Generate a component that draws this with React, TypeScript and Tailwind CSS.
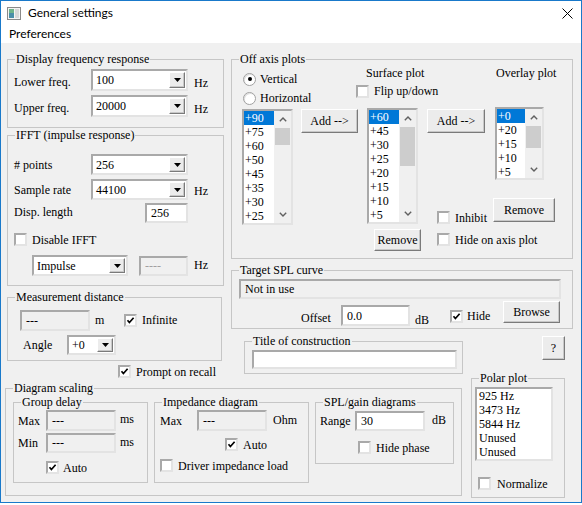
import React from "react";

// classic win32 3d edges
const sunken =
  "border-2 border-t-[#a9a9a9] border-l-[#a9a9a9] border-b-[#e3e3e3] border-r-[#e3e3e3]";
const raised =
  "border border-t-white border-l-white border-b-[#7a7a7a] border-r-[#7a7a7a] shadow-[inset_-1px_-1px_0_#c8c8c8] bg-[#ececec]";

function Group({
  title,
  className = "",
  children,
}: {
  title: string;
  className?: string;
  children?: React.ReactNode;
}) {
  return (
    <fieldset className={`border border-[#c6c6c6] shrink-0 ${className}`}>
      <legend className="ml-[7px] px-[1px] leading-[14px]">{title}</legend>
      {children}
    </fieldset>
  );
}

function Check({ checked = false }: { checked?: boolean }) {
  return (
    <div className={`w-[13px] h-[13px] shrink-0 bg-white ${sunken} flex items-center justify-center`}>
      {checked && (
        <svg width="9" height="9" viewBox="0 0 9 9">
          <polyline points="1.5,4.2 3.4,6.5 7.6,1.8" fill="none" stroke="#000" strokeWidth="1.7" />
        </svg>
      )}
    </div>
  );
}

function Radio({ checked = false }: { checked?: boolean }) {
  return (
    <div className="w-[13px] h-[13px] shrink-0 rounded-full border border-[#a0a0a0] bg-white flex items-center justify-center shadow-[inset_1px_1px_0_#e0e0e0]">
      {checked && <div className="w-[4px] h-[4px] rounded-full bg-black" />}
    </div>
  );
}

function Edit({
  value = "",
  className = "",
  disabled = false,
  gray = false,
}: {
  value?: string;
  className?: string;
  disabled?: boolean;
  gray?: boolean;
}) {
  return (
    <div
      className={`${sunken} ${disabled ? "bg-[#f0f0f0]" : "bg-white"} ${
        gray ? "text-[#a0a0a0]" : ""
      } flex items-center pl-[4px] whitespace-nowrap overflow-hidden shrink-0 ${className}`}
    >
      {value}
    </div>
  );
}

function Combo({ value, className = "" }: { value: string; className?: string }) {
  return (
    <div className={`${sunken} bg-white flex shrink-0 ${className}`}>
      <span className="flex-1 pl-[3px] self-center whitespace-nowrap">{value}</span>
      <span className={`w-[16px] my-[1px] mr-[1px] flex items-center justify-center ${raised}`}>
        <svg width="7" height="4" viewBox="0 0 7 4">
          <path d="M0 0h7L3.5 4z" fill="#000" />
        </svg>
      </span>
    </div>
  );
}

function Button({ label, className = "" }: { label: string; className?: string }) {
  return (
    <div className={`${raised} flex items-center justify-center shrink-0 whitespace-nowrap ${className}`}>
      {label}
    </div>
  );
}

function Chevron({ up }: { up?: boolean }) {
  return (
    <div className="h-[17px] flex items-center justify-center">
      <svg width="8" height="5" viewBox="0 0 8 5">
        <polyline
          points={up ? "0.8,4.3 4,1.1 7.2,4.3" : "0.8,0.7 4,3.9 7.2,0.7"}
          fill="none"
          stroke="#606060"
          strokeWidth="1.4"
        />
      </svg>
    </div>
  );
}

function ListBox({
  items,
  className,
  thumb,
}: {
  items: string[];
  className: string;
  thumb: string;
}) {
  return (
    <div className={`${sunken} bg-white flex overflow-hidden shrink-0 ${className}`}>
      <div className="flex-1 flex flex-col overflow-hidden">
        {items.map((it, i) => (
          <div
            key={it}
            className={`h-[14px] leading-[14px] pl-[1px] shrink-0 ${i === 0 ? "bg-[#0078d7] text-white" : ""}`}
          >
            {it}
          </div>
        ))}
      </div>
      <div className="w-[17px] bg-[#f0f0f0] flex flex-col">
        <Chevron up />
        <div className="flex-1">
          <div className={`bg-[#cdcdcd] mx-[1px] ${thumb}`} />
        </div>
        <Chevron />
      </div>
    </div>
  );
}

function CheckRow({
  label,
  checked,
  className = "",
  gap = "ml-[5px]",
}: {
  label: string;
  checked?: boolean;
  className?: string;
  gap?: string;
}) {
  return (
    <div className={`flex items-center whitespace-nowrap ${className}`}>
      <Check checked={checked} />
      <span className={gap}>{label}</span>
    </div>
  );
}

export default function App() {
  return (
    <div className="w-[582px] h-[505px] bg-white overflow-hidden">
      <div className="h-[503px] border border-[#1979ca] flex flex-col">
        {/* title bar */}
        <div className="h-[24px] flex items-center bg-white font-['Lato',sans-serif] text-[12px] text-black shrink-0">
          <svg width="14" height="13" viewBox="0 0 14 13" className="ml-[6px]">
            <rect x="0.5" y="0.5" width="13" height="12" fill="#f4f4f4" stroke="#8a8a8a" />
            <rect x="2" y="2" width="5" height="9" fill="#4a8fa8" />
            <rect x="2" y="2" width="5" height="4" fill="#6fb38a" />
            <rect x="8" y="2" width="4" height="9" fill="#d8d8d8" />
          </svg>
          <span className="ml-[7px]">General settings</span>
          <svg width="11" height="11" viewBox="0 0 11 11" className="ml-auto mr-[8px]">
            <path d="M0.5 0.5L10.5 10.5M10.5 0.5L0.5 10.5" stroke="#000" strokeWidth="1" />
          </svg>
        </div>

        {/* menu */}
        <div className="h-[18px] flex items-center bg-white font-['Lato',sans-serif] text-[12px] text-black pl-[8px] shrink-0">
          Preferences
        </div>

        {/* client */}
        <div className="flex-1 bg-[#f0f0f0] font-['Liberation_Serif',serif] text-[12px] leading-[14px] text-black">
          <div className="flex items-start mt-[9px]">
            {/* left column */}
            <div className="ml-[6px] w-[217px] flex flex-col shrink-0">
              <Group title="Display frequency response" className="w-[217px] h-[76px]">
                <div className="pl-[6px] pt-[3px] flex flex-col gap-[4px]">
                  <div className="flex items-start h-[22px]">
                    <span className="w-[77px] mt-[6px]">Lower freq.</span>
                    <Combo value="100" className="w-[97px] h-[22px]" />
                    <span className="ml-[6px] mt-[7px]">Hz</span>
                  </div>
                  <div className="flex items-start h-[22px]">
                    <span className="w-[77px] mt-[6px]">Upper freq.</span>
                    <Combo value="20000" className="w-[97px] h-[22px]" />
                    <span className="ml-[6px] mt-[7px]">Hz</span>
                  </div>
                </div>
              </Group>

              <Group title="IFFT (impulse response)" className="w-[217px] h-[158px]">
                <div className="pl-[6px] flex flex-col">
                  <div className="flex items-center mt-[12px] h-[21px]">
                    <span className="w-[77px]"># points</span>
                    <Combo value="256" className="w-[97px] h-[21px]" />
                  </div>
                  <div className="flex items-center mt-[4px] h-[21px]">
                    <span className="w-[77px]">Sample rate</span>
                    <Combo value="44100" className="w-[97px] h-[21px]" />
                    <span className="ml-[6px] mt-[3px]">Hz</span>
                  </div>
                  <div className="flex items-center mt-[3px] h-[20px]">
                    <span className="w-[131px] -mt-[2px]">Disp. length</span>
                    <Edit value="256" className="w-[43px] h-[20px]" />
                  </div>
                  <CheckRow label="Disable IFFT" className="mt-[10px] h-[13px]" />
                  <div className="flex items-center mt-[9px] h-[21px] ml-[18px]">
                    <Combo value="Impulse" className="w-[96px] h-[21px]" />
                    <Edit value="----" disabled gray className="ml-[11px] w-[49px] h-[20px]" />
                    <span className="ml-[6px] -mt-[2px]">Hz</span>
                  </div>
                </div>
              </Group>

              <Group title="Measurement distance" className="mt-[4px] w-[215px] h-[71px]">
                <div className="flex flex-col">
                  <div className="flex items-start mt-[6px] ml-[12px]">
                    <Edit value="---" disabled className="w-[70px] h-[21px]" />
                    <span className="ml-[5px] w-[29px] mt-[3px]">m</span>
                    <div className="mt-[4px]">
                      <Check checked />
                    </div>
                    <span className="ml-[5px] mt-[3px]">Infinite</span>
                  </div>
                  <div className="flex items-start mt-[4px] ml-[15px]">
                    <span className="w-[44px] mt-[3px]">Angle</span>
                    <Combo value="+0" className="w-[49px] h-[20px]" />
                  </div>
                </div>
              </Group>

              <CheckRow label="Prompt on recall" checked className="mt-[3px] ml-[111px] h-[15px]" />
            </div>

            {/* right column */}
            <div className="ml-[7px] w-[342px] flex flex-col shrink-0">
              <Group title="Off axis plots" className="w-[342px] h-[207px]">
                <div className="flex items-start">
                  {/* list of angles */}
                  <div className="ml-[10px] w-[51px] flex flex-col shrink-0">
                    <div className="flex items-center mt-[6px] ml-[1px] whitespace-nowrap">
                      <Radio checked />
                      <span className="ml-[4px]">Vertical</span>
                    </div>
                    <div className="flex items-center mt-[5px] ml-[1px] whitespace-nowrap">
                      <Radio />
                      <span className="ml-[4px]">Horizontal</span>
                    </div>
                    <ListBox
                      items={["+90", "+75", "+60", "+50", "+45", "+35", "+30", "+25"]}
                      className="mt-[4px] w-[51px] h-[116px]"
                      thumb="h-[17px]"
                    />
                  </div>

                  <Button label="Add -->" className="ml-[8px] mt-[43px] w-[57px] h-[24px]" />

                  {/* surface plot */}
                  <div className="-ml-[2px] w-[64px] flex flex-col shrink-0">
                    <span className="ml-[10px] whitespace-nowrap">Surface plot</span>
                    <CheckRow label="Flip up/down" className="mt-[4px]" />
                    <ListBox
                      items={["+60", "+45", "+30", "+25", "+20", "+15", "+10", "+5"]}
                      className="mt-[10px] ml-[11px] w-[51px] h-[116px]"
                      thumb="h-[39px]"
                    />
                    <Button label="Remove" className="mt-[5px] ml-[18px] w-[47px] h-[22px]" />
                  </div>

                  <div className="ml-[7px] w-[66px] flex flex-col shrink-0">
                    <Button label="Add -->" className="mt-[43px] w-[58px] h-[24px]" />
                    <CheckRow label="Inhibit" className="mt-[78px] ml-[10px] h-[13px]" />
                    <CheckRow label="Hide on axis plot" className="mt-[9px] ml-[10px] h-[13px]" />
                  </div>

                  {/* overlay plot */}
                  <div className="flex flex-col shrink-0">
                    <span className="ml-[3px] whitespace-nowrap">Overlay plot</span>
                    <ListBox
                      items={["+0", "+20", "+15", "+10", "+5"]}
                      className="mt-[27px] ml-[2px] w-[49px] h-[73px]"
                      thumb="h-[22px]"
                    />
                    <Button label="Remove" className="mt-[18px] w-[62px] h-[24px]" />
                  </div>
                </div>
              </Group>

              <Group title="Target SPL curve" className="mt-[4px] w-[342px] h-[66px]">
                <div className="flex flex-col">
                  <Edit value="Not in use" disabled className="mt-[2px] ml-[7px] w-[322px] h-[20px] pl-[3px]" />
                  <div className="flex items-start mt-[2px] ml-[69px]">
                    <span className="w-[40px] mt-[10px]">Offset</span>
                    <Edit value="0.0" className="mt-[4px] w-[69px] h-[21px]" />
                    <span className="ml-[5px] w-[35px] mt-[12px]">dB</span>
                    <div className="mt-[9px]">
                      <Check checked />
                    </div>
                    <span className="ml-[4px] w-[36px] mt-[8px]">Hide</span>
                    <Button label="Browse" className="w-[57px] h-[22px]" />
                  </div>
                </div>
              </Group>

              <div className="flex items-start mt-[5px]">
                <Group title="Title of construction" className="ml-[13px] w-[219px] h-[40px]">
                  <Edit className="mt-[2px] ml-[7px] w-[205px] h-[19px]" />
                </Group>
                <Button label="?" className="ml-[79px] mt-[2px] w-[23px] h-[24px]" />
              </div>
            </div>
          </div>

          {/* bottom row */}
          <div className="flex items-start mt-[2px]">
            <Group title="Diagram scaling" className="ml-[4px] w-[457px] h-[115px]">
              <div className="flex items-start ml-[7px]">
                <Group title="Group delay" className="w-[135px] h-[88px]">
                  <div className="flex flex-col">
                    <div className="flex items-center mt-[1px] h-[21px]">
                      <span className="ml-[4px] w-[28px]">Max</span>
                      <Edit value="---" disabled className="w-[70px] h-[21px]" />
                      <span className="ml-[4px] -mt-[3px]">ms</span>
                    </div>
                    <div className="flex items-center mt-[2px] h-[20px]">
                      <span className="ml-[4px] w-[28px]">Min</span>
                      <Edit value="---" disabled className="w-[70px] h-[20px]" />
                      <span className="ml-[4px] -mt-[3px]">ms</span>
                    </div>
                    <CheckRow label="Auto" checked gap="ml-[4px]" className="mt-[8px] ml-[32px] h-[13px]" />
                  </div>
                </Group>

                <Group title="Impedance diagram" className="ml-[6px] w-[155px] h-[88px]">
                  <div className="flex flex-col">
                    <div className="flex items-center mt-[1px] h-[21px]">
                      <span className="ml-[5px] w-[37px]">Max</span>
                      <Edit value="---" disabled className="w-[70px] h-[21px]" />
                      <span className="ml-[6px] -mt-[2px]">Ohm</span>
                    </div>
                    <CheckRow label="Auto" checked className="mt-[7px] ml-[70px] h-[13px]" />
                    <CheckRow label="Driver impedance load" className="mt-[8px] ml-[5px] h-[13px]" />
                  </div>
                </Group>

                <Group title="SPL/gain diagrams" className="ml-[6px] w-[139px] h-[69px]">
                  <div className="flex flex-col">
                    <div className="flex items-center mt-[2px] h-[20px]">
                      <span className="ml-[4px] w-[35px]">Range</span>
                      <Edit value="30" className="w-[70px] h-[20px]" />
                      <span className="ml-[7px] -mt-[2px]">dB</span>
                    </div>
                    <CheckRow label="Hide phase" className="mt-[10px] ml-[42px] h-[13px]" />
                  </div>
                </Group>
              </div>
            </Group>

            <Group title="Polar plot" className="ml-[9px] -mt-[10px] w-[94px] h-[127px]">
              <div className="flex flex-col">
                <div className={`mt-[2px] ml-[3px] w-[78px] h-[74px] bg-white ${sunken} flex flex-col pl-[2px]`}>
                  {["925 Hz", "3473 Hz", "5844 Hz", "Unused", "Unused"].map((it, i) => (
                    <div key={i} className="h-[14px] leading-[14px]">
                      {it}
                    </div>
                  ))}
                </div>
                <CheckRow label="Normalize" gap="ml-[6px]" className="mt-[16px] ml-[6px] h-[13px]" />
              </div>
            </Group>
          </div>
        </div>
      </div>
    </div>
  );
}
